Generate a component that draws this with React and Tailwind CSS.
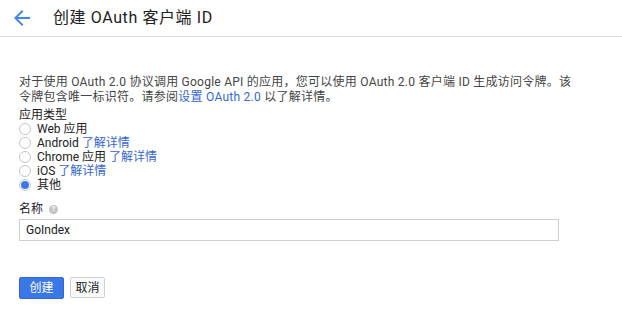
import { useState } from 'react';

const types = [
  { id: 'web', label: 'Web 应用', link: false },
  { id: 'android', label: 'Android', link: true },
  { id: 'chrome', label: 'Chrome 应用', link: true },
  { id: 'ios', label: 'iOS', link: true },
  { id: 'other', label: '其他', link: false },
];

function Radio({ checked }) {
  return (
    <span className="w-[12px] h-[12px] rounded-full border border-[#c6c6c6] bg-white flex items-center justify-center shrink-0">
      {checked && <span className="w-[8px] h-[8px] rounded-full bg-[#3b78e7]"></span>}
    </span>
  );
}

export default function App() {
  const [type, setType] = useState('other');
  const [name, setName] = useState('GoIndex');

  return (
    <div className="w-[622px] h-[314px] bg-white text-[#212121]" style={{ fontFamily: 'Roboto, "Noto Sans CJK SC", sans-serif' }}>
      {/* Header */}
      <div className="h-[37px] border-b border-[#dadada] flex items-center">
        <svg className="ml-[10px] w-[24px] h-[24px]" viewBox="0 0 24 24" fill="#4285f4">
          <path d="M20 11H7.83l5.59-5.59L12 4l-8 8 8 8 1.41-1.41L7.83 13H20v-2z" />
        </svg>
        <h1 className="ml-[19px] text-[16px] leading-none tracking-[0.6px] text-[#212121]">创建 OAuth 客户端 ID</h1>
      </div>

      <div className="px-[19px] pt-[38px]">
        <p className="w-[584px] text-[12px] leading-[15px] text-[#444] tracking-[0.25px]">
          对于使用 OAuth 2.0 协议调用 Google API 的应用，您可以使用 OAuth 2.0 客户端 ID 生成访问令牌。该<br />
          令牌包含唯一标识符。请参阅<a href="#" className="text-[#3367d6]">设置 OAuth 2.0</a> 以了解详情。
        </p>

        <div className="mt-[3px] text-[12px] leading-[14px] text-[#212121]">应用类型</div>
        <div className="flex flex-col">
          {types.map((t) => (
            <label key={t.id} className="h-[14px] flex items-center gap-[6px] text-[12px] leading-[14px] cursor-pointer" onClick={() => setType(t.id)}>
              <Radio checked={type === t.id} />
              <span>
                {t.label}
                {t.link && <a href="#" className="text-[#3367d6]"> 了解详情</a>}
              </span>
            </label>
          ))}
        </div>

        <div className="mt-[10px] h-[14px] flex items-center gap-[6px] text-[12px] leading-[14px]">
          <span>名称</span>
          <span className="w-[9px] h-[9px] rounded-full bg-[#c4c4c4] text-white text-[7px] font-bold flex items-center justify-center leading-none">?</span>
        </div>
        <input
          value={name}
          onChange={(e) => setName(e.target.value)}
          className="mt-[3px] w-[540px] h-[22px] border border-[#d0d0d0] px-[6px] text-[12px] text-[#212121] outline-none"
        />

        <div className="mt-[36px] flex gap-[6px]">
          <button className="w-[45px] h-[22px] rounded-[2px] bg-[#3b78e7] border border-[#3367d6] text-white text-[12px]">创建</button>
          <button className="w-[35px] h-[21px] rounded-[2px] bg-[#fafafa] border border-[#d0d0d0] text-[#212121] text-[12px]">取消</button>
        </div>
      </div>
    </div>
  );
}
